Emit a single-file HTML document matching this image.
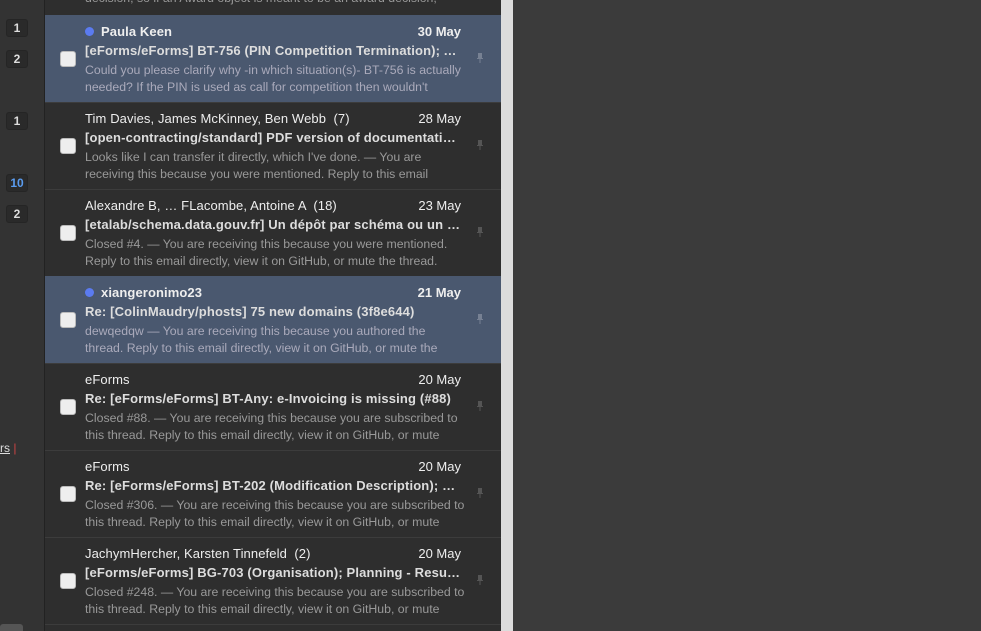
<!DOCTYPE html>
<html style="background:#3b3b3b"><head><style>
*{margin:0;padding:0;box-sizing:border-box}
html,body{width:981px;height:631px;overflow:hidden}
body{background:#3b3b3b;font-family:"Liberation Sans",sans-serif;position:relative}
#side{position:absolute;left:0;top:0;width:44px;height:631px;background:#333}
#sideb{position:absolute;left:44px;top:0;width:1px;height:631px;background:#222}
.bd{position:absolute;left:6px;width:22px;height:18px;border-radius:3px;background:#2a2a2a;border:1px solid #252525;color:#ddd;font-size:12px;font-weight:bold;text-align:center;line-height:16px}
#list{position:absolute;left:45px;top:0;width:456px;height:631px;background:#2e2e2e;overflow:hidden}
#sb{position:absolute;left:501px;top:0;width:12px;height:631px;background:#dcdcdc}
.row{position:absolute;left:0;width:456px;height:87px;border-top:1px solid #3c3c3c}
.row.u{background:#4a586f;border-top-color:#4a586f}
.cb{position:absolute;left:15px;top:35px;width:16px;height:16px;border-radius:3px;background:#eee;border:1px solid #bbb}
.fr{position:absolute;left:40px;top:8px;font-size:13px;color:#eee;white-space:nowrap;letter-spacing:0.1px}
.dt{position:absolute;right:40px;top:8px;font-size:13px;color:#eee}
.u .fr,.u .dt{font-weight:bold}
.dot{display:inline-block;width:9px;height:9px;border-radius:50%;background:#5b7bf0;margin-right:7px;vertical-align:0}
.sj{position:absolute;left:40px;top:27px;width:376px;font-size:13px;font-weight:bold;color:#ddd;white-space:nowrap;overflow:hidden;text-overflow:ellipsis;letter-spacing:0.15px}
.pv{position:absolute;left:40px;top:46px;width:380px;font-size:12.3px;color:#999;line-height:17px;height:34px;overflow:hidden}
.u .pv{color:#aab}
.pin{position:absolute;left:432px;top:37px;width:6px;height:10px;opacity:.7}
</style></head><body>
<div id="side"></div><div id="sideb"></div>
<div class="bd" style="top:19px">1</div>
<div class="bd" style="top:50px">2</div>
<div class="bd" style="top:112px">1</div>
<div class="bd" style="top:174px;color:#5a9cf0">10</div>
<div class="bd" style="top:205px">2</div>
<div style="position:absolute;left:0;top:441px;font-size:12px;color:#ddd"><u>rs</u> <span style="color:#c44">|</span></div>
<div style="position:absolute;left:0;top:624px;width:23px;height:7px;background:#555;border-radius:3px 3px 0 0"></div>
<div id="list">
<div style="position:absolute;left:40px;top:-9px;font-size:12.3px;color:#999">decision, so if an Award object is meant to be an award decision,</div>
<div class="row u" style="top:15px"><div class="cb"></div><div class="fr"><span class="dot"></span>Paula Keen</div><div class="dt">30 May</div><div class="sj">[eForms/eForms] BT-756 (PIN Competition Termination); Application of PIN</div><div class="pv">Could you please clarify why -in which situation(s)- BT-756 is actually needed? If the PIN is used as call for competition then wouldn't</div><svg class="pin" viewBox="0 0 6 10"><path d="M1 0h4v5h1v1H0V5h1zM2.5 6h1v4h-1z" fill="#8a93a3"/></svg></div>
<div class="row" style="top:102px"><div class="cb"></div><div class="fr">Tim Davies, James McKinney, Ben Webb &nbsp;(7)</div><div class="dt">28 May</div><div class="sj">[open-contracting/standard] PDF version of documentation for the standard</div><div class="pv">Looks like I can transfer it directly, which I've done. — You are receiving this because you were mentioned. Reply to this email</div><svg class="pin" viewBox="0 0 6 10"><path d="M1 0h4v5h1v1H0V5h1zM2.5 6h1v4h-1z" fill="#666"/></svg></div>
<div class="row" style="top:189px"><div class="cb"></div><div class="fr">Alexandre B, … FLacombe, Antoine A &nbsp;(18)</div><div class="dt">23 May</div><div class="sj">[etalab/schema.data.gouv.fr] Un dépôt par schéma ou un seul dépôt</div><div class="pv">Closed #4. — You are receiving this because you were mentioned. Reply to this email directly, view it on GitHub, or mute the thread.</div><svg class="pin" viewBox="0 0 6 10"><path d="M1 0h4v5h1v1H0V5h1zM2.5 6h1v4h-1z" fill="#666"/></svg></div>
<div class="row u" style="top:276px"><div class="cb"></div><div class="fr"><span class="dot"></span>xiangeronimo23</div><div class="dt">21 May</div><div class="sj">Re: [ColinMaudry/phosts] 75 new domains (3f8e644)</div><div class="pv">dewqedqw — You are receiving this because you authored the thread. Reply to this email directly, view it on GitHub, or mute the</div><svg class="pin" viewBox="0 0 6 10"><path d="M1 0h4v5h1v1H0V5h1zM2.5 6h1v4h-1z" fill="#8a93a3"/></svg></div>
<div class="row" style="top:363px"><div class="cb"></div><div class="fr">eForms</div><div class="dt">20 May</div><div class="sj">Re: [eForms/eForms] BT-Any: e-Invoicing is missing (#88)</div><div class="pv">Closed #88. — You are receiving this because you are subscribed to this thread. Reply to this email directly, view it on GitHub, or mute</div><svg class="pin" viewBox="0 0 6 10"><path d="M1 0h4v5h1v1H0V5h1zM2.5 6h1v4h-1z" fill="#666"/></svg></div>
<div class="row" style="top:450px"><div class="cb"></div><div class="fr">eForms</div><div class="dt">20 May</div><div class="sj">Re: [eForms/eForms] BT-202 (Modification Description); Description</div><div class="pv">Closed #306. — You are receiving this because you are subscribed to this thread. Reply to this email directly, view it on GitHub, or mute</div><svg class="pin" viewBox="0 0 6 10"><path d="M1 0h4v5h1v1H0V5h1zM2.5 6h1v4h-1z" fill="#666"/></svg></div>
<div class="row" style="top:537px"><div class="cb"></div><div class="fr">JachymHercher, Karsten Tinnefeld &nbsp;(2)</div><div class="dt">20 May</div><div class="sj">[eForms/eForms] BG-703 (Organisation); Planning - Result; Organisation</div><div class="pv">Closed #248. — You are receiving this because you are subscribed to this thread. Reply to this email directly, view it on GitHub, or mute</div><svg class="pin" viewBox="0 0 6 10"><path d="M1 0h4v5h1v1H0V5h1zM2.5 6h1v4h-1z" fill="#666"/></svg></div>
<div class="row" style="top:624px"></div>
</div>
<div id="sb"></div>
</body></html>
